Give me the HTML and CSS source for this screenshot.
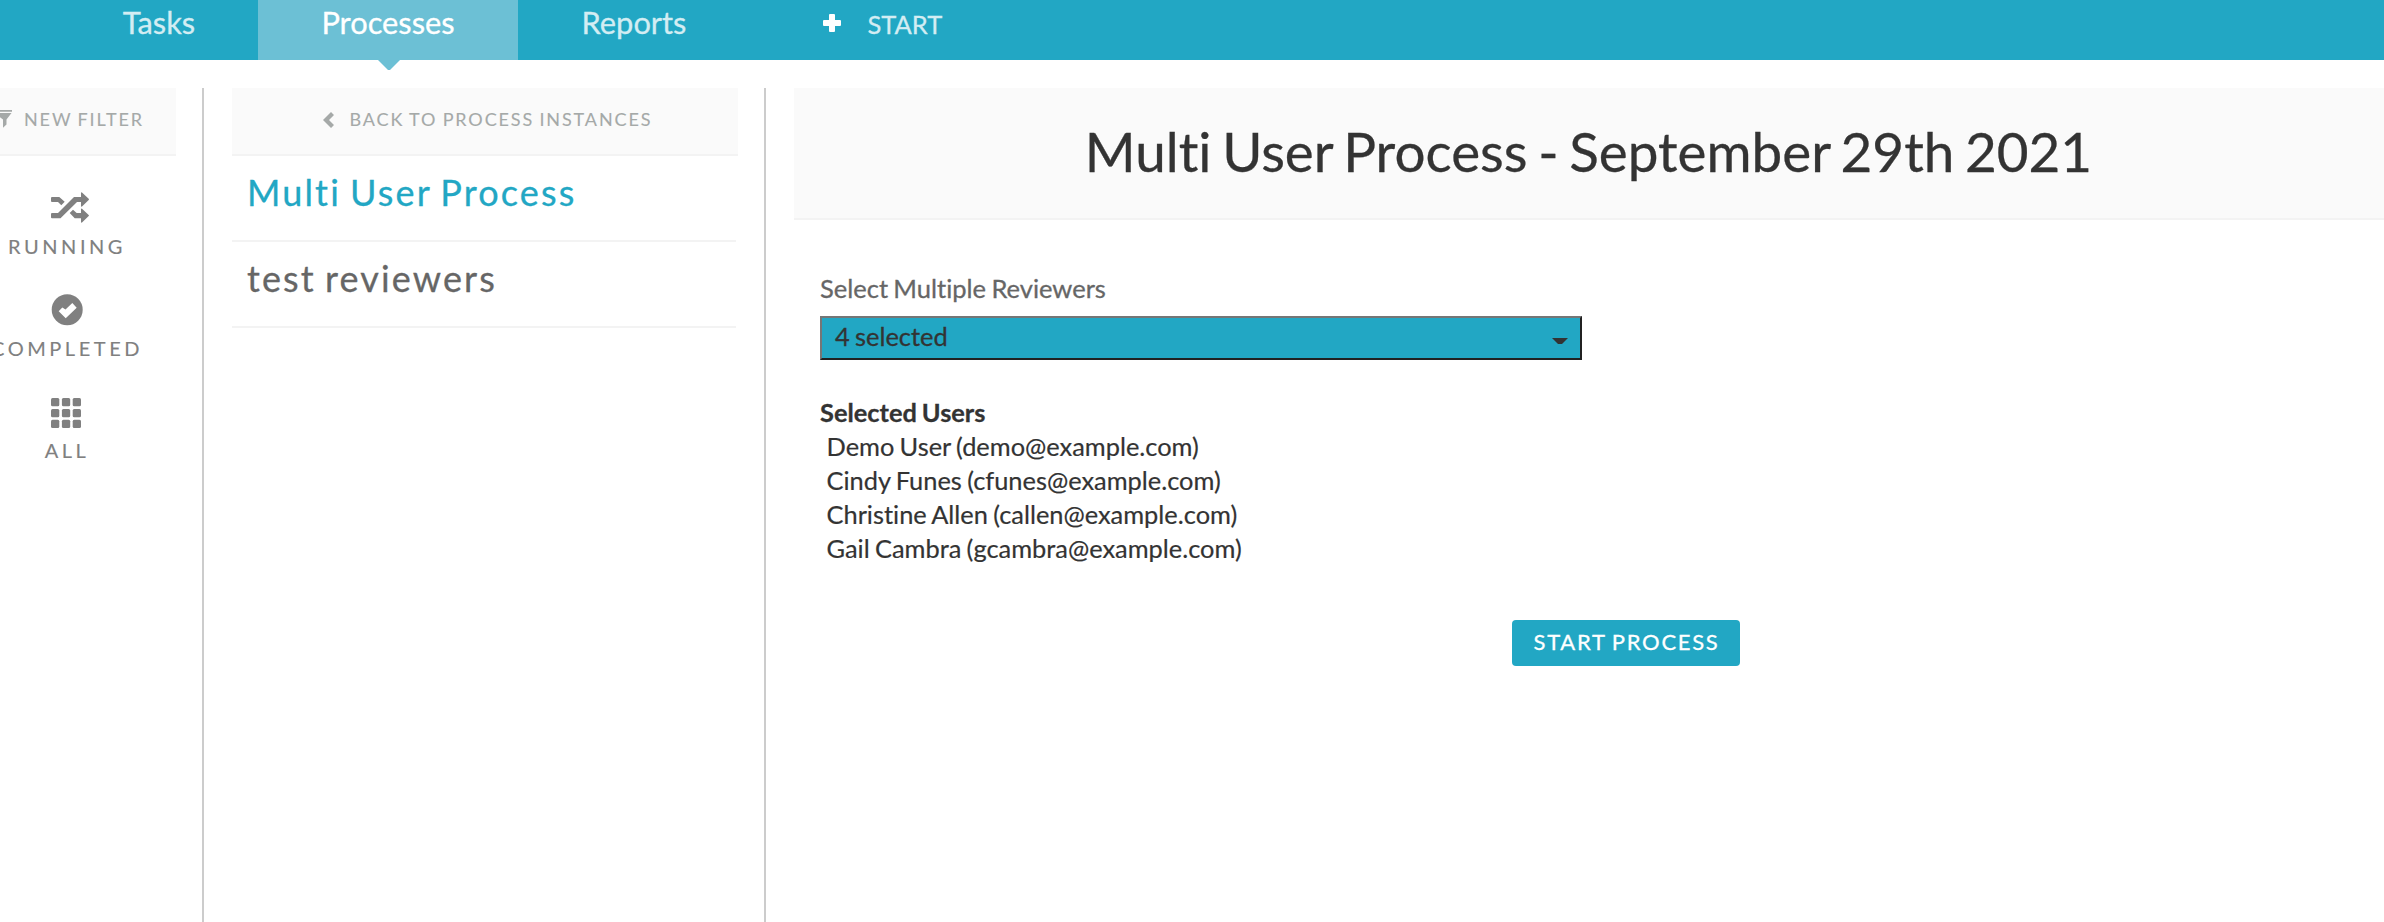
FILE: index.html
```html
<!DOCTYPE html>
<html lang="en">
<head>
<meta charset="utf-8">
<title>Processes</title>
<link rel="stylesheet" href="styles.css">
</head>
<body>
<nav class="nav">
  <a class="tab">Tasks</a>
  <a class="tab active">Processes</a>
  <a class="tab reports">Reports</a>
  <a class="start"><svg width="18" height="18" viewBox="0 0 18 18"><path d="M7 0h4q1 0 1 1v5h5q1 0 1 1v4q0 1-1 1h-5v5q0 1-1 1H7q-1 0-1-1v-5H1q-1 0-1-1V7q0-1 1-1h5V1q0-1 1-1z" fill="#fff"/></svg><span>START</span></a>
</nav>
<div class="columns">
  <aside class="filters">
    <div class="bar filter-bar"><svg width="18" height="18" viewBox="0 0 18 18"><path d="M0 0h18v1.700H0zM.5 3h17l-5 6.500v5L9 17.700V9.500z" fill="#a5a9a8"/></svg><span>NEW FILTER</span></div>
    <div class="filter-list">
      <a class="filter"><svg width="38" height="32" viewBox="0 0 38 32"><path d="M1 5h7.300l5.400 4.700-3.400 3.600L7 10H1Q0 10 0 9V6q0-1 1-1zM1 21h6L23 5h7V.8q.3-.8 1-.3l6.700 6.300q.5.600 0 1.200L31 14.500q-.7.400-1-.3V10h-4L9.500 26.300H1q-1 0-1-1V22q0-1 1-1zM18.700 21l3.300-3.300 3.700 3.300H30v-4q.3-.8 1-.3l6.700 6.200q.5.600 0 1.200L31 30.500q-.7.400-1-.3v-3.900h-6.300z" fill="#808080"/></svg><span>RUNNING</span></a>
      <a class="filter"><svg width="32" height="32" viewBox="0 0 32 32"><circle cx="16.200" cy="15.700" r="15.500" fill="#808080"/><path d="M7.700 17.200l3.600-3.800 3.200 2.200L21.300 9l4.400 4.700-11 10.600z" fill="#fff"/></svg><span>COMPLETED</span></a>
      <a class="filter all"><svg width="30" height="30" viewBox="0 0 30 30" fill="#808080"><rect width="8.300" height="8.300" rx="1.500"/><rect x="10.900" width="8.300" height="8.300" rx="1.500"/><rect x="21.700" width="8.300" height="8.300" rx="1.500"/><rect y="10.900" width="8.300" height="8.300" rx="1.500"/><rect x="10.900" y="10.900" width="8.300" height="8.300" rx="1.500"/><rect x="21.700" y="10.900" width="8.300" height="8.300" rx="1.500"/><rect y="21.700" width="8.300" height="8.300" rx="1.500"/><rect x="10.900" y="21.700" width="8.300" height="8.300" rx="1.500"/><rect x="21.700" y="21.700" width="8.300" height="8.300" rx="1.500"/></svg><span>ALL</span></a>
    </div>
  </aside>
  <section class="list">
    <div class="bar back-bar"><svg width="11" height="16" viewBox="0 0 11 16"><path d="M8 0l3 3-5 5 5 5-3 3-8-8z" fill="#a5a9a8"/></svg><span>BACK TO PROCESS INSTANCES</span></div>
    <a class="item selected">Multi User Process</a>
    <a class="item">test reviewers</a>
  </section>
  <main class="detail">
    <h1 class="title">Multi User Process - September 29th 2021</h1>
    <div class="form">
      <label class="label">Select Multiple Reviewers</label>
      <div class="select"><span>4 selected</span><i class="caret"></i></div>
      <div class="users">
        <strong>Selected Users</strong>
        <div class="user">Demo User (demo@example.com)</div>
        <div class="user">Cindy Funes (cfunes@example.com)</div>
        <div class="user">Christine Allen (callen@example.com)</div>
        <div class="user">Gail Cambra (gcambra@example.com)</div>
      </div>
    </div>
    <div class="actions"><button class="submit">START PROCESS</button></div>
  </main>
</div>
</body>
</html>
```
FILE: styles.css
```css
* { box-sizing: border-box; }
body {
  margin: 0;
  height: 922px;
  overflow: hidden;
  background: #fff;
  color: #333;
  font-family: Lato, sans-serif;
  font-variant-ligatures: none;
  -webkit-text-stroke: 0.3px;
  white-space: nowrap;
  display: flex;
  flex-direction: column;
}
.nav {
  height: 60px;
  flex: none;
  display: flex;
  padding-left: 60px;
  background: #22a7c4;
  color: #d3edf3;
}
.tab {
  width: 198px;
  position: relative;
  text-align: center;
  font-size: 30.8px;
  line-height: 45px;
}
.tab.active {
  width: 260px;
  background: #6cc0d5;
  color: #fff;
}
.tab.active::after {
  content: "";
  position: absolute;
  left: 120px;
  top: 60px;
  width: 22px;
  height: 10px;
  background: #6cc0d5;
  clip-path: polygon(0 0, 100% 0, 12px 100%, 10px 100%);
}
.tab.reports { width: 232px; }
.start {
  display: flex;
  gap: 26.5px;
  padding-left: 73px;
  font-size: 25.5px;
  line-height: 48px;
}
.start svg { margin-top: 14px; }
.columns {
  flex: 1;
  display: flex;
  padding-top: 28px;
}
.filters {
  width: 204px;
  border-right: 2px solid #ccc;
}
.list {
  width: 562px;
  padding: 0 26px 0 28px;
  border-right: 2px solid #ccc;
}
.bar {
  display: flex;
  height: 68px;
  background: #fafafa;
  border-bottom: 2px solid #f3f3f3;
  color: #a5a9a8;
  font-size: 18px;
  line-height: 62px;
  word-spacing: -1.1px;
  letter-spacing: 1.87px;
  -webkit-text-stroke: 0.1px;
}
.filter-bar {
  width: 176px;
  gap: 12px;
}
.filter-bar svg { margin: 22px 0 0 -6px; flex: none; }
.back-bar {
  gap: 15.5px;
  padding-left: 91px;
}
.back-bar svg { margin-top: 24px; flex: none; }
.filter-list {
  width: 134px;
  padding-top: 36px;
}
.filter {
  height: 102px;
  color: #808080;
  display: flex;
  flex-direction: column;
  align-items: center;
  font-size: 20px;
  line-height: 24px;
  letter-spacing: 3.55px;
  -webkit-text-stroke: 0.15px;
}
.filter svg {
  margin: 0 0 10px 51px;
  align-self: flex-start;
  flex: none;
}
.filter.all { padding-top: 2px; }
.item {
  display: block;
  width: 504px;
  height: 86px;
  padding-left: 15px;
  border-bottom: 2px solid #f3f3f3;
  color: #666;
  font-size: 36px;
  letter-spacing: 2.15px;
  word-spacing: -2.3px;
  line-height: 72px;
}
.item.selected { color: #22a7c4; }
.detail {
  flex: 1;
  padding-left: 28px;
}
.title {
  margin: 0;
  height: 132px;
  padding-right: 1px;
  background: #fafafa;
  border-bottom: 2px solid #f3f3f3;
  text-align: center;
  font-size: 54.8px;
  font-weight: 400;
  line-height: 126px;
  word-spacing: -3.4px;
}
.form {
  padding: 48px 0 0 26px;
  font-size: 25.4px;
  word-spacing: -1.2px;
}
.label {
  display: block;
  height: 48px;
  color: #666;
  font-size: 25.5px;
  line-height: 40px;
}
.select {
  display: flex;
  justify-content: space-between;
  width: 762px;
  height: 44px;
  padding: 0 12px 0 13px;
  background: #22a7c4;
  border: 2px solid;
  border-color: #767676 #212121 #212121 #767676;
  line-height: 36px;
}
.caret {
  width: 16px;
  height: 6px;
  margin-top: 20px;
  background: #333;
  clip-path: polygon(0 0, 100% 0, 10px 100%, 6px 100%);
}
.users {
  padding-top: 35px;
  line-height: 34px;
}
.users strong { display: block; }
.user {
  padding-left: 6.5px;
  -webkit-text-stroke: 0.2px;
}
.actions { padding: 55px 0 0 718px; }
.submit {
  display: block;
  width: 228px;
  height: 46px;
  padding: 0 0 3px 1px;
  border: 0;
  border-radius: 4px;
  background: #22a7c4;
  color: #fff;
  font: 22px/43px Lato, sans-serif;
  letter-spacing: 1.7px;
  word-spacing: -1.4px;
}
```
